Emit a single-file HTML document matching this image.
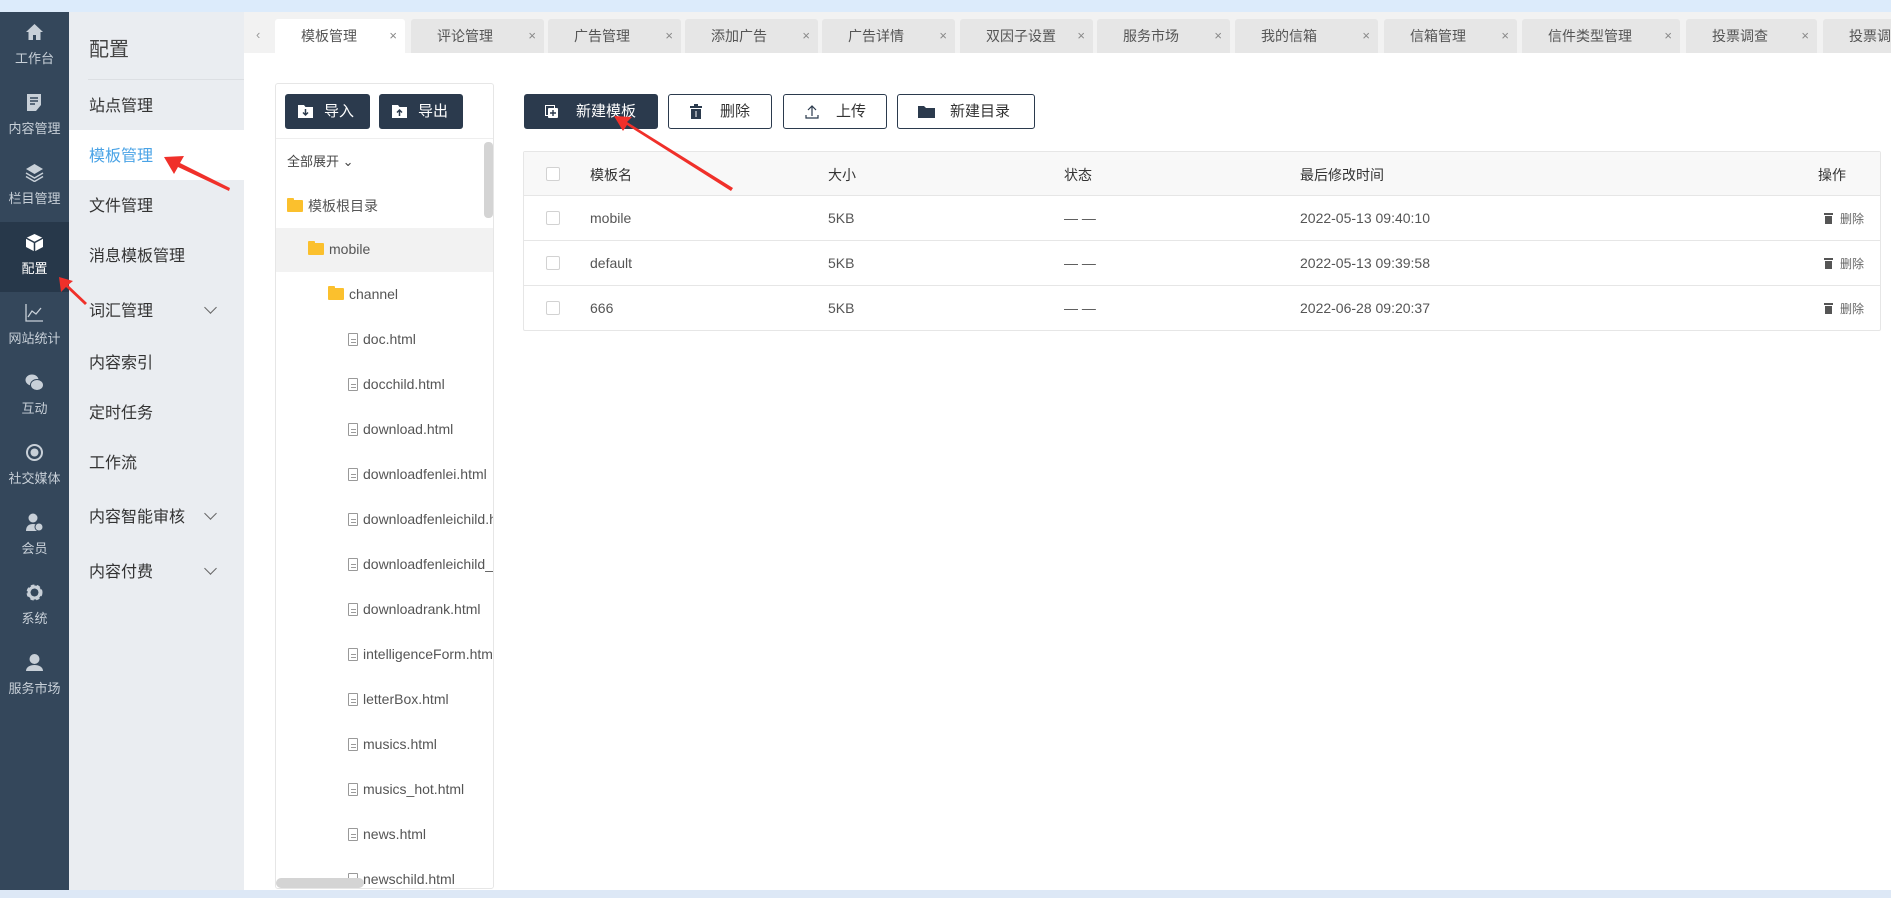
<!DOCTYPE html>
<html><head><meta charset="utf-8"><style>
*{margin:0;padding:0;box-sizing:border-box}
body{width:1891px;height:898px;overflow:hidden;position:relative;background:#fff;font-family:"Liberation Sans","Noto Sans CJK SC",sans-serif;color:#333}
.a{position:absolute}
.topbar{left:0;top:0;width:1891px;height:12px;background:#dcebfb}
.side{left:0;top:12px;width:69px;height:878px;background:#34475b}
.si{position:absolute;left:0;width:69px;height:70px;text-align:center;color:#c8d0d8;font-size:13px}
.si svg{position:absolute;left:25px;top:11px}
.si span{position:absolute;left:0;right:0;top:36px}
.si.on{background:#27384a;color:#fff}
.menu{left:69px;top:12px;width:175px;height:878px;background:#eaedf1}
.mi{position:absolute;left:20px;font-size:16px;color:#333}
.chev{position:absolute;left:137px;width:9px;height:9px;border-right:1.3px solid #666;border-bottom:1.3px solid #666;transform:rotate(45deg)}
.tabbar{left:244px;top:12px;width:1647px;height:41px;background:#f2f2f2}
.tab{position:absolute;top:19px;height:34px;background:#e6e6e6;border-radius:3px 3px 0 0;font-size:14px;color:#555;line-height:34px}
.tab b{font-weight:normal;position:absolute;left:26px}
.tab i{font-style:normal;position:absolute;right:8px;color:#888;font-size:13px}
.tree{left:275px;top:83px;width:219px;height:806px;border:1px solid #e6e6e6;border-radius:3px;overflow:hidden}
.btn{position:absolute;height:35px;border-radius:3px;font-size:15px;line-height:35px;background:#2b3a4d;color:#fff}
.ti{position:absolute;font-size:14px;color:#555;white-space:nowrap}
.fi{display:inline-block;width:10px;height:13px;border:1px solid #999;border-radius:1px;vertical-align:-2px;margin-right:5px;background:linear-gradient(#999,#999) 2px 5px/5px 1px no-repeat,linear-gradient(#999,#999) 2px 8px/5px 1px no-repeat}
.fo{display:inline-block;width:16px;height:12px;background:#fbc02d;border-radius:1px;vertical-align:-1px;margin-right:5px;position:relative}
.fo:before{content:"";position:absolute;left:0;top:-2px;width:7px;height:3px;background:#fbc02d;border-radius:1px 1px 0 0}
.obtn{position:absolute;top:94px;height:35px;border:1px solid #2b3a4d;border-radius:3px;font-size:15px;line-height:33px;color:#333}
.tbl{left:523px;top:151px;width:1358px;height:180px;border:1px solid #e6e6e6;border-radius:2px}
.row{position:absolute;left:0;width:1356px;border-bottom:1px solid #e6e6e6;font-size:14px;color:#555}
.row div{position:absolute;top:0}
.cb{width:14px;height:14px;border:1px solid #d2d2d2;border-radius:2px;background:#fff}
.bot{left:0;top:890px;width:1891px;height:8px;background:#dde8f6}
.tr{display:inline-block;width:9px;height:11px;margin-right:7px;vertical-align:-1px;background:linear-gradient(#555,#555) 0 0/9px 2px no-repeat,linear-gradient(#555,#555) 1px 3px/7px 8px no-repeat}
</style></head><body>
<div class="a topbar"></div>
<div class="a side">
 <div class="si" style="top:0"><svg width="19" height="18" viewBox="0 0 19 18"><path d="M9.5 1L1 9h2.5v8h4.5v-5h3v5h4.5V9H18z" fill="#c8d0d8"/></svg><span>工作台</span></div>
 <div class="si" style="top:70px"><svg width="19" height="19" viewBox="0 0 19 19"><path d="M2 1h14v11l-5 6H2z" fill="#c8d0d8"/><path d="M5 5h8M5 8h8M5 11h5" stroke="#34475b" stroke-width="1.5"/></svg><span>内容管理</span></div>
 <div class="si" style="top:140px"><svg width="19" height="19" viewBox="0 0 19 19"><path d="M9.5 1L1 6l8.5 5L18 6z" fill="#c8d0d8"/><path d="M1 10l8.5 5 8.5-5M1 13.5l8.5 5 8.5-5" stroke="#c8d0d8" fill="none" stroke-width="1.5"/></svg><span>栏目管理</span></div>
 <div class="si on" style="top:210px"><svg width="19" height="19" viewBox="0 0 19 19"><path d="M9.5 1L1 5v9l8.5 4.5L18 14V5z" fill="#fff"/><path d="M1 5l8.5 4.5L18 5M9.5 9.5v9" stroke="#27384a" stroke-width="1.5" fill="none"/></svg><span>配置</span></div>
 <div class="si" style="top:280px"><svg width="19" height="19" viewBox="0 0 19 19"><path d="M1 1v17h17M3 14l4-6 4 3 5-6" stroke="#c8d0d8" fill="none" stroke-width="1.3"/></svg><span>网站统计</span></div>
 <div class="si" style="top:350px"><svg width="19" height="19" viewBox="0 0 19 19"><ellipse cx="7" cy="7" rx="6.5" ry="5.5" fill="#c8d0d8"/><ellipse cx="12" cy="12" rx="6.5" ry="5.5" fill="#c8d0d8" stroke="#34475b"/></svg><span>互动</span></div>
 <div class="si" style="top:420px"><svg width="19" height="19" viewBox="0 0 19 19"><circle cx="9.5" cy="9.5" r="7.5" stroke="#c8d0d8" stroke-width="2" fill="none"/><circle cx="9.5" cy="9.5" r="4" fill="#c8d0d8"/></svg><span>社交媒体</span></div>
 <div class="si" style="top:490px"><svg width="19" height="19" viewBox="0 0 19 19"><circle cx="8" cy="5" r="4.5" fill="#c8d0d8"/><path d="M1 18c0-5 3-7 7-7s6 2 6 3v4z" fill="#c8d0d8"/><circle cx="14" cy="14" r="4" fill="#c8d0d8" stroke="#34475b"/></svg><span>会员</span></div>
 <div class="si" style="top:560px"><svg width="19" height="19" viewBox="0 0 19 19"><circle cx="9.5" cy="9.5" r="6" fill="none" stroke="#c8d0d8" stroke-width="4" stroke-dasharray="3 2"/><circle cx="9.5" cy="9.5" r="5.5" fill="none" stroke="#c8d0d8" stroke-width="3"/></svg><span>系统</span></div>
 <div class="si" style="top:630px"><svg width="19" height="19" viewBox="0 0 19 19"><circle cx="9.5" cy="6" r="5" fill="#c8d0d8"/><path d="M1 18c0-4 4-6 8.5-6s8.5 2 8.5 6z" fill="#c8d0d8"/></svg><span>服务市场</span></div>
</div>
<div class="a menu">
 <div class="mi" style="top:21px;font-size:20px;color:#444">配置</div>
 <div style="position:absolute;left:19px;top:67px;width:156px;height:1px;background:#dcdfe3"></div>
 <div class="mi" style="top:80px">站点管理</div>
 <div style="position:absolute;left:0;top:118px;width:175px;height:50px;background:#fff"></div>
 <div class="mi" style="top:130px;color:#4aa3e6">模板管理</div>
 <div class="mi" style="top:180px">文件管理</div>
 <div class="mi" style="top:230px">消息模板管理</div>
 <div class="mi" style="top:285px">词汇管理</div><div class="chev" style="top:291px"></div>
 <div class="mi" style="top:337px">内容索引</div>
 <div class="mi" style="top:387px">定时任务</div>
 <div class="mi" style="top:437px">工作流</div>
 <div class="mi" style="top:491px">内容智能审核</div><div class="chev" style="top:497px"></div>
 <div class="mi" style="top:546px">内容付费</div><div class="chev" style="top:552px"></div>
</div>
<div class="a tabbar"></div>
<div class="a" style="left:256px;top:27px;font-size:13px;color:#999">‹</div>
<div class="tab" style="left:275px;width:130px;background:#fff"><b>模板管理</b><i>×</i></div>
<div class="tab" style="left:411px;width:133px"><b>评论管理</b><i>×</i></div>
<div class="tab" style="left:548px;width:133px"><b>广告管理</b><i>×</i></div>
<div class="tab" style="left:685px;width:133px"><b>添加广告</b><i>×</i></div>
<div class="tab" style="left:822px;width:133px"><b>广告详情</b><i>×</i></div>
<div class="tab" style="left:960px;width:133px"><b>双因子设置</b><i>×</i></div>
<div class="tab" style="left:1097px;width:133px"><b>服务市场</b><i>×</i></div>
<div class="tab" style="left:1235px;width:143px"><b>我的信箱</b><i>×</i></div>
<div class="tab" style="left:1384px;width:133px"><b>信箱管理</b><i>×</i></div>
<div class="tab" style="left:1522px;width:158px"><b>信件类型管理</b><i>×</i></div>
<div class="tab" style="left:1686px;width:131px"><b>投票调查</b><i>×</i></div>
<div class="tab" style="left:1823px;width:80px"><b>投票调</b></div>

<div class="a tree">
 <div class="btn" style="left:9px;top:10px;width:85px"><svg style="position:absolute;left:13px;top:11px" width="15" height="13" viewBox="0 0 15 13"><path d="M0 0h6l1.5 2H15v11H0z" fill="#fff"/><path d="M7.5 4v6M5 7.5l2.5 2.5 2.5-2.5" stroke="#2b3a4d" stroke-width="1.5" fill="none"/></svg><span style="position:absolute;left:39px">导入</span></div>
 <div class="btn" style="left:103px;top:10px;width:84px"><svg style="position:absolute;left:13px;top:11px" width="15" height="13" viewBox="0 0 15 13"><path d="M0 0h6l1.5 2H15v11H0z" fill="#fff"/><path d="M7.5 11V5M5 7.5l2.5-2.5 2.5 2.5" stroke="#2b3a4d" stroke-width="1.5" fill="none"/></svg><span style="position:absolute;left:39px">导出</span></div>
 <div style="position:absolute;left:0;top:54px;width:219px;height:1px;background:#eee"></div>
 <div class="ti" style="left:11px;top:67px;font-size:13px;color:#444">全部展开 ⌄</div>
 <div class="ti" style="left:11px;top:112px"><span class="fo"></span>模板根目录</div>
 <div style="position:absolute;left:0;top:144px;width:219px;height:44px;background:#f2f2f2"></div>
 <div class="ti" style="left:32px;top:157px"><span class="fo"></span>mobile</div>
 <div class="ti" style="left:52px;top:202px"><span class="fo"></span>channel</div>
 <div class="ti" style="left:72px;top:247px"><span class="fi"></span>doc.html</div>
 <div class="ti" style="left:72px;top:292px"><span class="fi"></span>docchild.html</div>
 <div class="ti" style="left:72px;top:337px"><span class="fi"></span>download.html</div>
 <div class="ti" style="left:72px;top:382px"><span class="fi"></span>downloadfenlei.html</div>
 <div class="ti" style="left:72px;top:427px"><span class="fi"></span>downloadfenleichild.html</div>
 <div class="ti" style="left:72px;top:472px"><span class="fi"></span>downloadfenleichild_.html</div>
 <div class="ti" style="left:72px;top:517px"><span class="fi"></span>downloadrank.html</div>
 <div class="ti" style="left:72px;top:562px"><span class="fi"></span>intelligenceForm.html</div>
 <div class="ti" style="left:72px;top:607px"><span class="fi"></span>letterBox.html</div>
 <div class="ti" style="left:72px;top:652px"><span class="fi"></span>musics.html</div>
 <div class="ti" style="left:72px;top:697px"><span class="fi"></span>musics_hot.html</div>
 <div class="ti" style="left:72px;top:742px"><span class="fi"></span>news.html</div>
 <div class="ti" style="left:72px;top:787px"><span class="fi"></span>newschild.html</div>
 <div style="position:absolute;left:208px;top:58px;width:9px;height:76px;background:#d4d4d4;border-radius:4px"></div>
 <div style="position:absolute;left:0;top:794px;width:88px;height:10px;background:#d4d4d4;border-radius:5px"></div>
</div>

<div class="btn" style="left:524px;top:94px;width:134px"><svg style="position:absolute;left:21px;top:11px" width="14" height="14" viewBox="0 0 14 14"><rect x="0.5" y="0.5" width="9" height="10" fill="none" stroke="#fff"/><rect x="3" y="3" width="10" height="10" fill="#fff" rx="1"/><path d="M8 5v6M5 8h6" stroke="#2b3a4d" stroke-width="1.4"/></svg><span style="position:absolute;left:52px">新建模板</span></div>
<div class="obtn" style="left:668px;width:104px"><svg style="position:absolute;left:21px;top:9px" width="12" height="15" viewBox="0 0 12 15"><rect x="0" y="2" width="12" height="2" fill="#2b3a4d"/><rect x="4" y="0" width="4" height="2" fill="#2b3a4d"/><rect x="1" y="5" width="10" height="10" fill="#2b3a4d"/><path d="M6 7v6" stroke="#fff"/></svg><span style="position:absolute;left:51px">删除</span></div>
<div class="obtn" style="left:783px;width:104px"><svg style="position:absolute;left:21px;top:10px" width="14" height="14" viewBox="0 0 14 14"><path d="M7 11V1M3 5l4-4 4 4M1 10v3h12v-3" stroke="#2b3a4d" fill="none" stroke-width="1.2"/></svg><span style="position:absolute;left:52px">上传</span></div>
<div class="obtn" style="left:897px;width:138px"><svg style="position:absolute;left:20px;top:10px" width="17" height="13" viewBox="0 0 17 13"><path d="M0 1h6l2 2h9v10H0z" fill="#2b3a4d"/></svg><span style="position:absolute;left:52px">新建目录</span></div>

<div class="a tbl">
 <div class="row" style="top:0;height:44px;background:#f8f8f8;color:#333"><div class="cb" style="left:22px;top:15px"></div><div style="left:66px;top:13px">模板名</div><div style="left:304px;top:13px">大小</div><div style="left:540px;top:13px">状态</div><div style="left:776px;top:13px">最后修改时间</div><div style="left:1294px;top:13px">操作</div></div>
 <div class="row" style="top:44px;height:45px"><div class="cb" style="left:22px;top:15px"></div><div style="left:66px;top:14px">mobile</div><div style="left:304px;top:14px">5KB</div><div style="left:540px;top:14px">— —</div><div style="left:776px;top:14px">2022-05-13 09:40:10</div><div style="left:1300px;top:14px;font-size:12px;color:#666"><span class="tr"></span>删除</div></div>
 <div class="row" style="top:89px;height:45px"><div class="cb" style="left:22px;top:15px"></div><div style="left:66px;top:14px">default</div><div style="left:304px;top:14px">5KB</div><div style="left:540px;top:14px">— —</div><div style="left:776px;top:14px">2022-05-13 09:39:58</div><div style="left:1300px;top:14px;font-size:12px;color:#666"><span class="tr"></span>删除</div></div>
 <div class="row" style="top:134px;height:45px;border-bottom:none"><div class="cb" style="left:22px;top:15px"></div><div style="left:66px;top:14px">666</div><div style="left:304px;top:14px">5KB</div><div style="left:540px;top:14px">— —</div><div style="left:776px;top:14px">2022-06-28 09:20:37</div><div style="left:1300px;top:14px;font-size:12px;color:#666"><span class="tr"></span>删除</div></div>
</div>

<svg class="a" style="left:0;top:0" width="1891" height="898">
 <g fill="#f0302a">
  <polygon points="229,191 178,167 174,174 164,157 184,156 180,163 230,188"/>
  <polygon points="85,305 66,287 61,292 59,277 73,281 68,285 87,303"/>
  <polygon points="731,191 627,125 623,131 614,116 632,117 627,122 733,188"/>
 </g>
</svg>
<div class="a bot"></div>
</body></html>
